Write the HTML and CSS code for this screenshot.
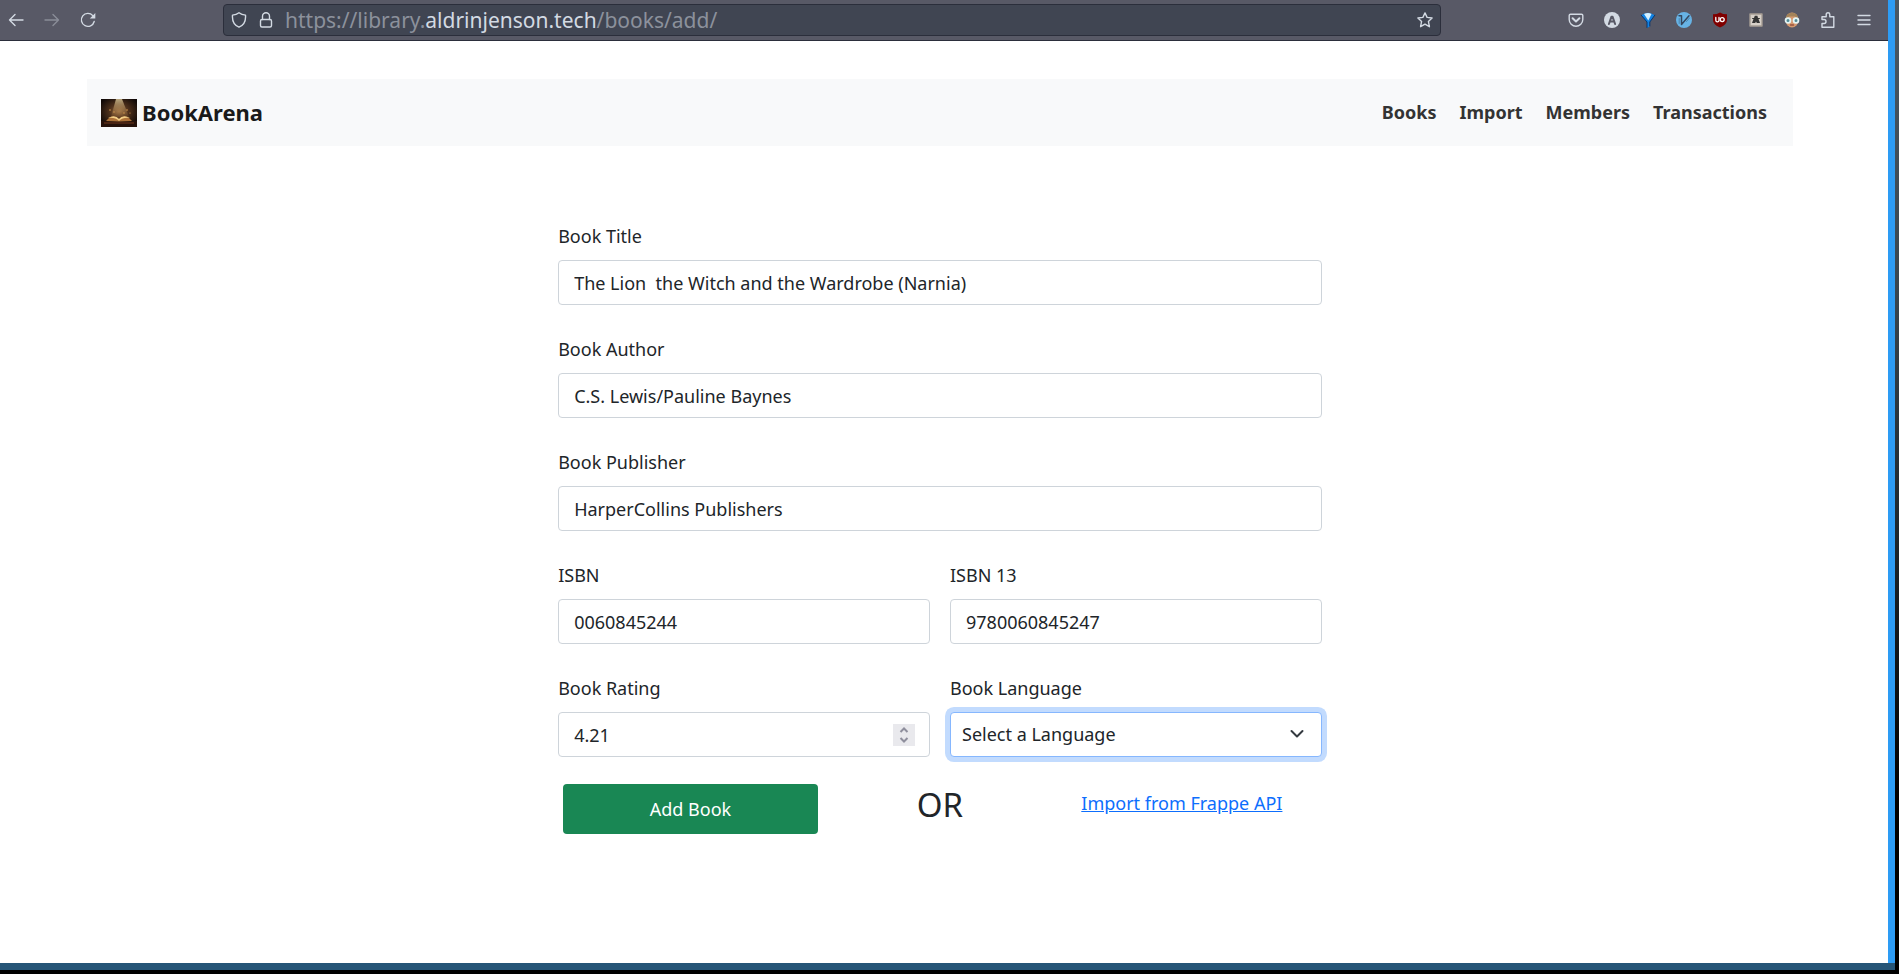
FILE: index.html
```html
<!DOCTYPE html>
<html lang="en">
<head>
<meta charset="utf-8">
<title>BookArena</title>
<link rel="stylesheet" href="styles.css">
</head>
<body>
<div class="window">
<div class="frame">
  <header class="toolbar">
    <div class="history">
      <button class="tool" aria-label="Back"><svg width="16" height="16" viewBox="0 0 16 16"><path d="M15 8H1.5M7 2.5 1.5 8 7 13.500"/></svg></button>
      <button class="tool dim" aria-label="Forward"><svg width="16" height="16" viewBox="0 0 16 16"><path d="M1 8h13.500M9 2.500 14.500 8 9 13.500"/></svg></button>
      <button class="tool" aria-label="Reload"><svg width="16" height="16" viewBox="0 0 16 16"><path d="M14.200 9.500A6.500 6.500 0 1 1 12.800 3.600"/><path class="solid" d="M15.300 1v5.500H9.800z"/></svg></button>
    </div>
    <div class="address">
      <button class="tool" aria-label="Tracking protection"><svg width="16" height="16" viewBox="0 0 16 16"><path d="M8 .8C6 2.300 4 2.900 1.500 3.100c-.5 6 1.300 10 6.500 12.100 5.200-2.100 7-6.100 6.500-12.100C12 2.900 10 2.300 8 .8z"/></svg></button>
      <button class="tool" aria-label="Site security"><svg width="16" height="16" viewBox="0 0 16 16"><rect x="2.500" y="7.500" width="11" height="7.500" rx="1.500"/><path d="M4.500 7.500V4.300a3.500 3.500 0 0 1 7 0v3.200"/></svg></button>
      <div class="url">https://library.<span class="domain">aldrinjenson.tech</span>/books/add/</div>
      <button class="tool" aria-label="Bookmark"><svg width="16" height="16" viewBox="0 0 16 16"><path d="m8 .9 2.100 4.500 5 .6-3.700 3.400 1 5.300L8 12.100l-4.400 2.600 1-5.300L.9 6l5-.6z"/></svg></button>
    </div>
    <div class="extensions">
      <button class="tool" aria-label="Pocket"><svg width="16" height="16" viewBox="0 0 16 16"><path d="M2.500 2.200h11q1.300 0 1.300 1.300V7.500a6.800 6.800 0 0 1-13.600 0V3.500q0-1.300 1.300-1.300z"/><path class="bold" d="M4.600 6.200 8 9.400l3.400-3.200"/></svg></button>
      <button class="tool" aria-label="Account"><svg width="16" height="16" viewBox="0 0 16 16"><circle class="solid" cx="8" cy="8" r="8"/><path class="slate" d="m4.900 12 2.500-7.200h1.200L11.100 12M5.900 9.500h4.200"/></svg></button>
      <button class="tool" aria-label="Pin extension"><svg width="16" height="16" viewBox="0 0 16 16"><path d="M1.200 3.200Q8-1.800 14.800 3.200L9.800 10v4.500L7 16v-6z" fill="#1283e4" stroke="none"/><path d="M1.200 3.200 7 10V15.500M14.800 3.200 9.800 10v4" stroke="#07366f" stroke-width="1"/><path d="M4 2Q8 0 11.500 2L8.300 8.500z" fill="#d6f1ff" stroke="none"/></svg></button>
      <button class="tool" aria-label="Vimium"><svg width="16" height="16" viewBox="0 0 16 16"><circle cx="8" cy="8" r="8" fill="#67b3e5" stroke="none"/><path d="M3 3.800h2.500v8.700L13 3.800" stroke="#34475e" stroke-width="1.500"/><path d="M3.200 6.500v5M10.500 9.500l3-3.500" stroke="#4b85ad" stroke-width="1"/></svg></button>
      <button class="tool" aria-label="Content blocker"><svg width="16" height="16" viewBox="0 0 16 16"><path d="M8 .4Q5 2.200 1 2.300V8q0 4.500 7 7.600Q15 12.500 15 8V2.300Q11 2.200 8 .4z" fill="#800000" stroke="none"/><path d="M3.800 5.500v2.700q0 1.600 1.600 1.600T7 8.200V5.500" stroke="#fff" stroke-width="1.300"/><circle cx="10.200" cy="7.600" r="2" stroke="#fff" stroke-width="1.300"/></svg></button>
      <button class="tool" aria-label="Privacy extension"><svg width="16" height="16" viewBox="0 0 16 16"><path d="M2 2h12v12H2z" fill="#d7d0c8" stroke="#a69d94"/><path d="m6 6 .8-2.200h2.600L10 6h1.800v1H10.500L12 11H8.800L8 9.500 7.200 11H4l1.500-4H4.200V6z" fill="#343434" stroke="none"/></svg></button>
      <button class="tool" aria-label="Reader extension"><svg width="16" height="16" viewBox="0 0 16 16"><ellipse cx="8" cy="8" rx="6.500" ry="7.500" fill="#d69a70" stroke="none"/><path d="M1.800 7Q2 .8 8 .8T14.200 7L11 4.500H5z" fill="#a3835a" stroke="none"/><circle cx="4" cy="8.500" r="2.400" fill="#528b96" stroke="#e4f5f5" stroke-width="1.800"/><circle cx="12" cy="8.500" r="2.400" fill="#528b96" stroke="#e4f5f5" stroke-width="1.800"/><path d="M6.500 13h3" stroke="#96513e"/></svg></button>
      <button class="tool" aria-label="Extensions"><svg width="16" height="16" viewBox="0 0 16 16"><path d="M2 7.500V4.700h4.200V2.500a1.800 1.800 0 0 1 3.600 0v2.200h4v10.500H2v-3.700h2a2 2 0 0 0 0-4z"/></svg></button>
      <button class="tool" aria-label="Menu"><svg width="16" height="16" viewBox="0 0 16 16"><path d="M2 3.500h12M2 8h12M2 12.500h12"/></svg></button>
    </div>
  </header>
  <div class="page">
    <nav class="navbar">
      <a class="brand" href="#">
        <svg width="36" height="28" viewBox="0 0 36 28">
          <defs>
            <radialGradient id="glow" cx=".5" cy=".45" r=".6"><stop offset="0" stop-color="#94693d"/><stop offset=".45" stop-color="#4d301b"/><stop offset="1" stop-color="#100907"/></radialGradient>
            <linearGradient id="ray" x2="0" y2="1"><stop offset="0" stop-color="#f5e3ae"/><stop offset="1" stop-color="#c28b4a" stop-opacity=".1"/></linearGradient>
          </defs>
          <path d="M0 0h36v28H0z" fill="url(#glow)"/>
          <path d="M15 0h6l7 18H10z" fill="url(#ray)" opacity=".7"/>
          <path d="M0 22h36v6H0z" fill="#26120a"/>
          <path d="M5 22q3-4 6-4.500 5-.5 7 2.500 2-3 7-2.500 3 .5 6 4.500l-12 .5h-2z" fill="#ad7238"/>
          <path d="M7 19q7-4 11 1 4-5 11-1-7-1-11 3-4-4-11-3z" fill="#f3cf86"/>
          <path d="M3 24h30" stroke="#6e371b"/>
          <g fill="#d79c51"><circle cx="9" cy="11" r=".8"/><circle cx="13" cy="13" r=".7"/><circle cx="26" cy="11" r=".8"/><circle cx="23" cy="14" r=".7"/><circle cx="29" cy="14" r=".6"/></g>
        </svg>
        <span>BookArena</span>
      </a>
      <div class="links">
        <a href="#">Books</a>
        <a href="#">Import</a>
        <a href="#">Members</a>
        <a href="#">Transactions</a>
      </div>
    </nav>
    <form class="form">
      <div class="field"><label for="title">Book Title</label><input class="control" id="title" type="text" value="The Lion  the Witch and the Wardrobe (Narnia)"></div>
      <div class="field"><label for="author">Book Author</label><input class="control" id="author" type="text" value="C.S. Lewis/Pauline Baynes"></div>
      <div class="field"><label for="publisher">Book Publisher</label><input class="control" id="publisher" type="text" value="HarperCollins Publishers"></div>
      <div class="pair">
        <div class="field"><label for="isbn">ISBN</label><input class="control" id="isbn" type="text" value="0060845244"></div>
        <div class="field"><label for="isbn13">ISBN 13</label><input class="control" id="isbn13" type="text" value="9780060845247"></div>
      </div>
      <div class="pair">
        <div class="field"><label for="rating">Book Rating</label>
          <div class="adorned"><input class="control" id="rating" type="number" step="0.01" value="4.21"><svg class="spinner" width="22" height="22" viewBox="0 0 22 22"><path d="m7.500 8 3.500-3.500L14.500 8M7.500 14l3.500 3.500 3.500-3.500"/></svg></div>
        </div>
        <div class="field"><label for="language">Book Language</label>
          <div class="adorned"><select class="control select" id="language"><option>Select a Language</option></select><svg class="chevron" width="14" height="14" viewBox="0 0 14 14"><path d="m1.500 4 5.500 5.500L12.500 4"/></svg></div>
        </div>
      </div>
      <div class="actions">
        <button class="submit" type="submit">Add Book</button>
        <span class="or">OR</span>
        <a class="import" href="#">Import from Frappe API</a>
      </div>
    </form>
  </div>
</div>
</div>
</body>
</html>
```
FILE: styles.css
```css
* { box-sizing: border-box; }
body {
  margin: 0;
  min-height: 100vh;
  display: flex;
  padding: 0 4px 4px 0;
  background: linear-gradient(#4a5964, #38464f 30%, #1c262c 55%, #000 82%);
  color: #212529;
  font: 18px/27px "Noto Sans", sans-serif;
}
.window {
  flex: 1;
  display: flex;
  border-bottom: 7px solid #265577;
}
.frame { flex: 1; background: #fff; border-right: 7px solid #2d9cf4; }
.toolbar {
  display: flex;
  align-items: center;
  height: 41px;
  padding: 0 16px 0 8px;
  background: #585966;
  border-bottom: 1px solid #2b2e3b;
}
.tool {
  display: flex;
  padding: 0;
  border: 0;
  background: none;
}
.tool svg { fill: none; stroke: #d3dae3; stroke-width: 1.4; stroke-linecap: round; stroke-linejoin: round; }
.tool .solid { fill: #d3dae3; stroke: none; }
.tool .bold { stroke-width: 2; }
.tool .slate { stroke: #585966; stroke-width: 2; }
.dim { opacity: .4; }
.history { display: flex; gap: 20px; width: 215px; }
.address {
  flex: 1;
  display: flex;
  align-items: center;
  gap: 11px;
  height: 32px;
  padding: 0 7px;
  border: 1px solid #2b2e3b;
  border-radius: 4px;
  background: #404552;
}
.url { flex: 1; color: #8c919c; font-size: 21px; white-space: nowrap; }
.domain { color: #d3dae3; }
.extensions { display: flex; gap: 20px; margin-left: 127px; }
.page { padding: 38px 95px 0 87px; }
.navbar {
  display: flex;
  align-items: center;
  justify-content: space-between;
  height: 67px;
  padding: 0 26px 0 14px;
  background: #f8f9fa;
}
.brand {
  display: flex;
  align-items: center;
  gap: 5px;
  color: #1a1a1a;
  font-size: 22px;
  font-weight: 700;
  text-decoration: none;
}
.links { display: flex; gap: 23px; }
.links a { color: #333; font-weight: 700; text-decoration: none; }
.form {
  display: flex;
  flex-direction: column;
  gap: 32px;
  width: 45%;
  margin: 78px auto 0;
  padding: 0 2px;
}
.field { display: flex; flex-direction: column; gap: 11px; line-height: 25px; }
.pair { display: grid; grid-template-columns: 1fr 1fr; gap: 20px; }
.control {
  width: 100%;
  height: 45px;
  padding: 0 15px;
  border: 1px solid #ced4da;
  border-radius: 4px;
  outline: 0;
  background: #fff;
  color: #212529;
  font: inherit;
  appearance: none;
}
.control::-webkit-inner-spin-button { appearance: none; margin: 0; }
.select {
  padding: 0 11px;
  border-color: #86b7fe;
  box-shadow: 0 0 0 5px #c2dbfe;
}
.adorned { position: relative; }
.adorned svg { position: absolute; pointer-events: none; fill: none; }
.spinner { right: 15px; top: 12px; background: #e9e9ed; stroke: #8f8f9d; stroke-width: 2; }
.chevron { right: 18px; top: 15px; stroke: #343a40; stroke-width: 2; stroke-linecap: round; stroke-linejoin: round; }
.actions {
  display: grid;
  grid-template-columns: 1fr 1fr 1fr;
  justify-items: center;
  margin-top: -5px;
}
.submit {
  justify-self: start;
  width: 100%;
  height: 50px;
  margin-left: 5px;
  border: 0;
  border-radius: 4px;
  background: #198754;
  color: #fff;
  font: inherit;
}
.or { padding-top: 1px; font-size: 33px; line-height: 40px; }
.import { justify-self: start; padding: 6px 0 0 14px; color: #0d6efd; }
```
